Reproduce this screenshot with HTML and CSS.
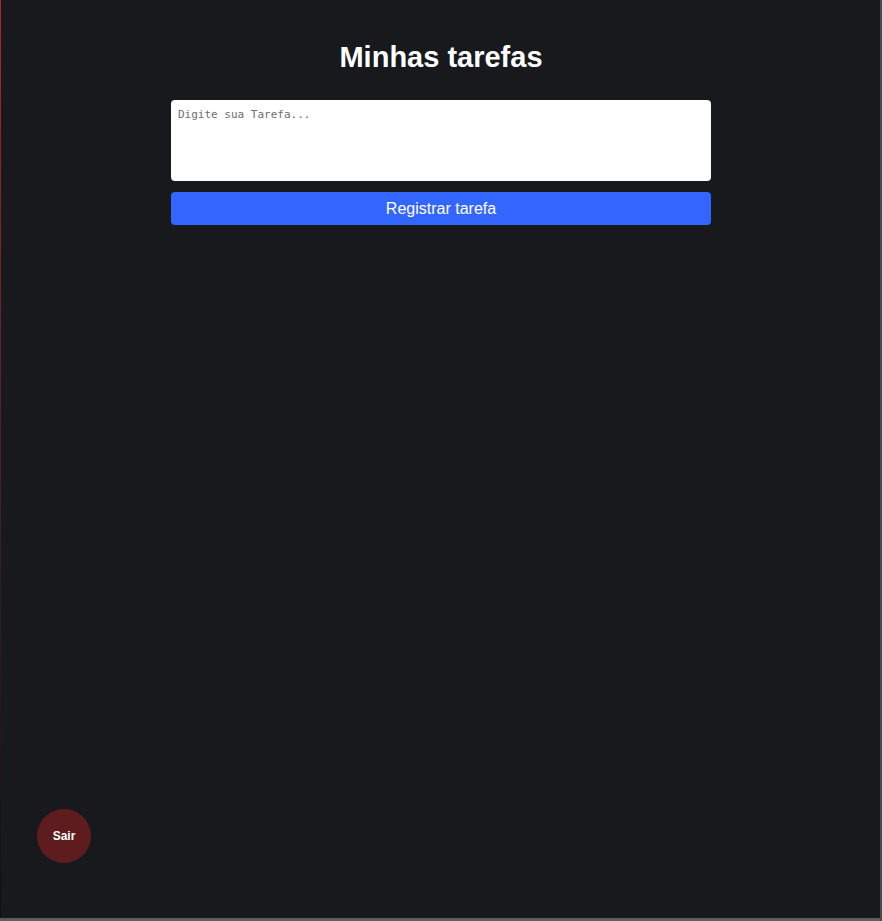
FILE: index.html
```html
<!DOCTYPE html>
<html lang="pt-BR">
<head>
<meta charset="utf-8">
<title>Minhas tarefas</title>
<link rel="stylesheet" href="styles.css">
</head>
<body>
<div class="frame">
  <main class="container">
    <h1 class="title">Minhas tarefas</h1>
    <form class="form">
      <textarea class="input" placeholder="Digite sua Tarefa..."></textarea>
      <button type="button" class="btn">Registrar tarefa</button>
    </form>
  </main>
  <button type="button" class="logout">Sair</button>
</div>
</body>
</html>
```

FILE: styles.css
```css
* { box-sizing: border-box; }
html, body {
  margin: 0;
  padding: 0;
  background: #18191d;
}
.frame {
  position: relative;
  width: 882px;
  height: 921px;
  background: #18191d;
  box-shadow: inset -2px 0 0 #4a4d50, inset 0 -3px 0 #5b5f60;
  font-family: "Liberation Sans", Arial, sans-serif;
}
.frame::before {
  content: "";
  position: absolute;
  left: 0;
  top: 0;
  width: 1px;
  height: 918px;
  background: linear-gradient(to bottom, #b51e42 0%, #3a1d2a 60%, #0f0f12 100%);
}
.container {
  width: 540px;
  margin: 0 auto;
  padding-top: 39px;
  display: flex;
  flex-direction: column;
  align-items: stretch;
}
.title {
  margin: 0 0 25px;
  color: #ffffff;
  font-size: 29px;
  font-weight: bold;
  text-align: center;
  line-height: 36px;
}
.form {
  display: flex;
  flex-direction: column;
  gap: 11px;
}
.input {
  width: 540px;
  height: 81px;
  border: none;
  border-radius: 4px;
  background: #ffffff;
  padding: 8px 7px;
  font-family: "DejaVu Sans Mono", monospace;
  font-size: 11px;
  resize: none;
  outline: none;
}
.input::placeholder { color: #6e6e6e; }
.btn {
  height: 33px;
  border: none;
  border-radius: 4px;
  background: #3366ff;
  color: #ffffff;
  font-family: "Liberation Sans", Arial, sans-serif;
  font-size: 16px;
  cursor: pointer;
}
.logout {
  position: absolute;
  left: 37px;
  top: 809px;
  width: 54px;
  height: 54px;
  border-radius: 50%;
  border: none;
  background: #5e1c1f;
  color: #ffffff;
  font-family: "Liberation Sans", Arial, sans-serif;
  font-weight: bold;
  font-size: 12px;
}
```
